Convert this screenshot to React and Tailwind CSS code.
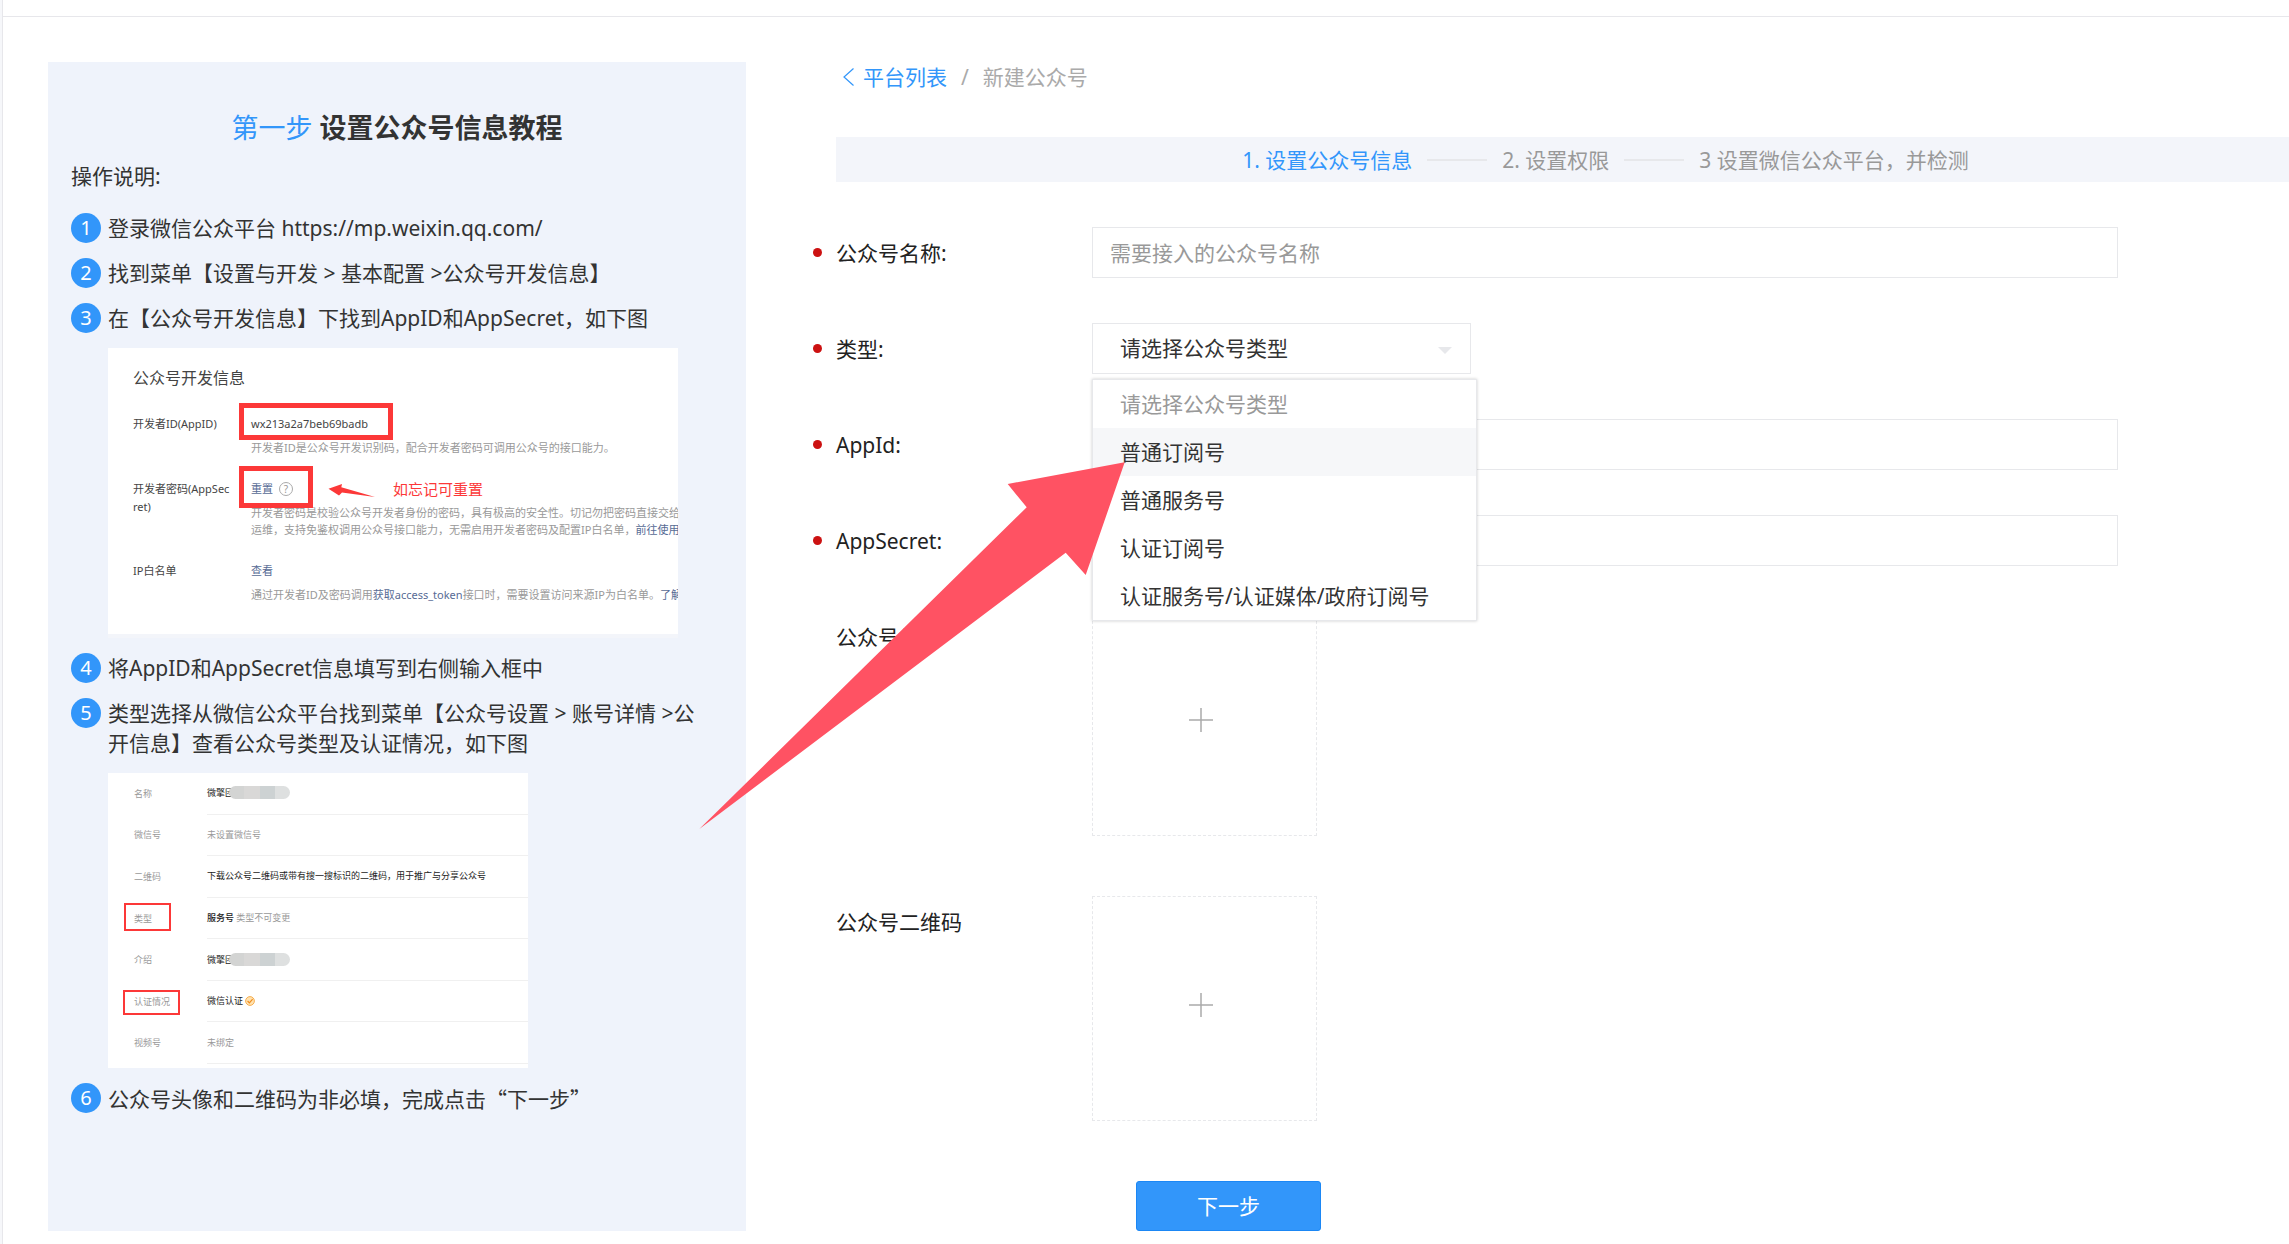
import React, { useState } from 'react';

const steps = ['1. 设置公众号信息', '2. 设置权限', '3 设置微信公众平台，并检测'];

const accountTypes = [
  '请选择公众号类型',
  '普通订阅号',
  '普通服务号',
  '认证订阅号',
  '认证服务号/认证媒体/政府订阅号',
];

const GuideItem = ({ index, children }) => (
  <li className="flex items-start gap-[7px]">
    <span className="w-[30px] h-[30px] shrink-0 rounded-full bg-[#3296fa] text-white text-center text-[20px] leading-[30px]">
      {index}
    </span>
    <div className="min-w-0 flex-1">{children}</div>
  </li>
);

const RedFrame = ({ className }) => (
  <span className={`absolute border-[#fc3838] ${className}`} aria-hidden="true" />
);

const DevInfoCard = () => (
  <div className="mt-[15px] w-full max-w-[570px] overflow-hidden border-b-4 border-[#f3f5fa] bg-white pl-[25px] pt-[21px] pb-[31px] text-[11px] leading-[18px] text-[#444] whitespace-nowrap">
    <h3 className="mb-7 text-[16px] leading-[18px]">公众号开发信息</h3>
    <dl className="grid grid-cols-[118px_1fr] gap-y-6">
      <dt>开发者ID(AppID)</dt>
      <dd className="relative">
        <RedFrame className="-left-[12px] -top-[12px] h-[37px] w-[154px] border-[5px]" />
        wx213a2a7beb69badb
        <p className="mt-[6px] leading-[17px] text-[#999]">
          开发者ID是公众号开发识别码，配合开发者密码可调用公众号的接口能力。
        </p>
      </dd>

      <dt>
        开发者密码(AppSec
        <br />
        ret)
      </dt>
      <dd className="relative">
        <RedFrame className="-left-[12px] -top-[14px] h-[42px] w-[74px] border-[5px]" />
        <div className="flex items-center">
          <a href="#reset" className="text-[#576b95]">重置</a>
          <span className="ml-[6px] h-[14px] w-[14px] rounded-full border border-[#aaa] text-center text-[10px] leading-[12px] text-[#999]">
            ?
          </span>
          <svg className="ml-[35px] h-[16px] w-[48px]" viewBox="0 0 48 16" fill="#fc3838">
            <path d="M0.5 7.7 L14 3 L13.3 6.2 L47 16 L14 11.6 L11 14.6 Z" />
          </svg>
          <span className="ml-[17px] text-[15px] text-[#fc3838]">如忘记可重置</span>
        </div>
        <p className="mt-[6px] leading-[17px] text-[#999]">
          开发者密码是校验公众号开发者身份的密码，具有极高的安全性。切记勿把密码直接交给
          <br />
          运维，支持免鉴权调用公众号接口能力，无需启用开发者密码及配置IP白名单，
          <a href="#use" className="text-[#576b95]">前往使用</a>
        </p>
      </dd>

      <dt>IP白名单</dt>
      <dd>
        <a href="#ip" className="text-[#576b95]">查看</a>
        <p className="mt-[6px] leading-[17px] text-[#999]">
          通过开发者ID及密码调用
          <a href="#token" className="text-[#576b95]">获取access_token</a>
          接口时，需要设置访问来源IP为白名单。
          <a href="#more" className="text-[#576b95]">了解</a>
        </p>
      </dd>
    </dl>
  </div>
);

const MaskedName = () => (
  <span className="relative block text-[#222]">
    微擎团
    <span className="absolute left-[22px] -top-px flex h-[13px] w-[61px] overflow-hidden rounded-full">
      <span className="flex-1 bg-[#d3d4d3]" />
      <span className="flex-1 bg-[#d9d8d7]" />
      <span className="flex-1 bg-[#cdd2d3]" />
      <span className="flex-1 bg-[#dee0e0]" />
    </span>
  </span>
);

const accountRows = [
  { label: '名称', value: <MaskedName /> },
  { label: '微信号', value: '未设置微信号' },
  {
    label: '二维码',
    value: <span className="text-[#222]">下载公众号二维码或带有搜一搜标识的二维码，用于推广与分享公众号</span>,
  },
  {
    label: '类型',
    frame: '-left-[10px] -top-[10px] h-[28px] w-[47px] border-2',
    value: (
      <>
        <b className="font-medium text-[#222]">服务号</b> 类型不可变更
      </>
    ),
  },
  { label: '介绍', value: <MaskedName /> },
  {
    label: '认证情况',
    frame: '-left-[11px] -top-[6px] h-[25px] w-[57px] border-2',
    value: (
      <span className="flex items-center gap-[2px] text-[#222]">
        微信认证
        <svg className="h-[10px] w-[10px]" viewBox="0 0 10 10" fill="none">
          <circle cx="5" cy="5" r="4.4" fill="#ffe2b0" stroke="#f5a742" strokeWidth="0.9" />
          <path d="M2.6 5 L4.4 6.8 L7.6 3.2" stroke="#f08c1e" strokeWidth="1.2" />
        </svg>
      </span>
    ),
  },
  { label: '视频号', value: '未绑定' },
];

const AccountCard = () => (
  <dl className="mt-[15px] flex h-[295px] max-w-[420px] flex-col bg-white pl-[26px] pb-1 text-[9px] leading-[12px] text-[#999] whitespace-nowrap">
    {accountRows.map((row) => (
      <div key={row.label} className="flex flex-1">
        <dt className="flex w-[73px] items-center">
          <span className="relative">
            {row.label}
            {row.frame && <RedFrame className={row.frame} />}
          </span>
        </dt>
        <dd className="flex flex-1 items-center border-b border-[#f0f0f0]">
          <div>{row.value}</div>
        </dd>
      </div>
    ))}
  </dl>
);

const Guide = () => (
  <aside className="w-[698px] shrink-0 bg-[#eff3fb] px-[23px] pt-[47px] text-[#333]">
    <h2 className="text-center text-[27px] font-bold leading-[38px]">
      <span className="font-normal text-[#3296fa]">第一步</span> 设置公众号信息教程
    </h2>
    <p className="mt-[14px]">操作说明:</p>
    <ol className="mt-[22px] flex flex-col gap-[15px]">
      <GuideItem index={1}>登录微信公众平台 https://mp.weixin.qq.com/</GuideItem>
      <GuideItem index={2}>找到菜单【设置与开发 &gt; 基本配置 &gt;公众号开发信息】</GuideItem>
      <GuideItem index={3}>
        在【公众号开发信息】下找到AppID和AppSecret，如下图
        <DevInfoCard />
      </GuideItem>
      <GuideItem index={4}>将AppID和AppSecret信息填写到右侧输入框中</GuideItem>
      <GuideItem index={5}>
        <p className="pr-4">
          类型选择从微信公众平台找到菜单【公众号设置 &gt; 账号详情 &gt;公开信息】查看公众号类型及认证情况，如下图
        </p>
        <AccountCard />
      </GuideItem>
      <GuideItem index={6}>
        公众号头像和二维码为非必填，完成点击
        <span className="font-['Noto_Sans_CJK_SC',sans-serif]">“下一步”</span>
      </GuideItem>
    </ol>
  </aside>
);

const Field = ({ label, id, required, children }) => (
  <div className="relative flex items-start">
    {required && (
      <span className="absolute -left-[23px] top-[21px] h-[9px] w-[9px] rounded-full bg-[#cc1111]" />
    )}
    <label htmlFor={id} className="w-[256px] shrink-0 leading-[52px]">
      {label}
    </label>
    {children}
  </div>
);

const TextInput = (props) => (
  <input
    type="text"
    className="h-[51px] min-w-0 flex-1 border border-[#e7e8eb] bg-white px-[17px] outline-none placeholder:text-[#999]"
    {...props}
  />
);

const UploadBox = ({ id }) => (
  <button
    id={id}
    type="button"
    aria-label="上传图片"
    className="flex h-[225px] w-[225px] items-center justify-center border border-dashed border-[#e7e8eb] pr-2 pb-2"
  >
    <svg className="h-6 w-6" viewBox="0 0 24 24" stroke="#aaa" strokeWidth="1.5">
      <path d="M12 0 V24 M0 12 H24" />
    </svg>
  </button>
);

const TypeSelect = () => {
  const [value, setValue] = useState(accountTypes[0]);

  return (
    <div className="relative w-[379px]">
      <select
        id="type"
        value={value}
        onChange={(e) => setValue(e.target.value)}
        className="block h-[51px] w-full appearance-none border border-[#e7e8eb] bg-white px-[27px] pb-[2px] text-[#333] outline-none"
      >
        {accountTypes.map((type) => (
          <option key={type}>{type}</option>
        ))}
      </select>
      <svg className="pointer-events-none absolute right-[19px] top-6 h-[7px] w-[14px]" viewBox="0 0 14 7" fill="#e7e8eb">
        <path d="M0 0 H14 L7 7 Z" />
      </svg>
      <ul className="absolute left-0 top-[56px] z-10 w-[385px] border border-[#e7e8eb] bg-white text-[#333] shadow-[0_0_3px_rgba(0,0,0,0.2)]">
        {accountTypes.map((type, i) => (
          <li key={type}>
            <button
              type="button"
              onClick={() => setValue(type)}
              className={`block h-12 w-full px-[27px] text-left ${i === 0 ? 'text-[#999]' : ''} ${i === 1 ? 'bg-[#f6f7f9]' : ''}`}
            >
              {type}
            </button>
          </li>
        ))}
      </ul>
    </div>
  );
};

const PointerArrow = () => (
  <svg
    className="pointer-events-none absolute -left-[137px] top-[400px] z-20 h-[368px] w-[427px]"
    viewBox="0 0 427 368"
    fill="#ff5263"
    aria-hidden="true"
  >
    <path d="M425.7 0.3 L308.7 22 L327.7 45.3 L0.3 367 L366.7 90.7 L386.7 113 Z" />
  </svg>
);

const App = () => {
  return (
    <div className="flex min-h-screen overflow-hidden bg-white font-['Noto_Sans','Noto_Sans_CJK_SC',sans-serif] text-[21px] leading-[30px] text-[#222]">
      <div className="w-[3px] shrink-0 border-r border-[#e7e7eb] bg-[#f6f7fa]" />
      <div className="min-w-0 flex-1">
        <div className="h-[17px] border-b border-[#e7e7eb]" />
        <div className="flex pl-[45px] pt-[45px] pb-[13px]">
          <Guide />
          <main className="relative ml-[90px] min-w-0 flex-1">
            <nav className="flex items-center pl-[7px] text-[#aaa]">
              <a href="#list" className="flex items-center gap-[9px] text-[#3296fa]">
                <svg className="h-[18px] w-[11px]" viewBox="0 0 11 18" fill="none" stroke="#3296fa" strokeWidth="1.2">
                  <path d="M10.5 0.5 L1 9 L10.5 17.5" />
                </svg>
                平台列表
              </a>
              <span className="mx-[14px]">/</span>
              新建公众号
            </nav>

            <ol className="mt-[45px] flex h-[45px] items-center justify-center bg-[#f3f5fa] pl-[86px] text-[#999]">
              {steps.map((step, i) => (
                <li key={step} className="flex items-center whitespace-nowrap">
                  {i > 0 && <span className="mx-[15px] h-[2px] w-[60px] bg-[#e7e8eb]" />}
                  <span className={i === 0 ? 'text-[#3296fa]' : ''}>{step}</span>
                </li>
              ))}
            </ol>

            <form className="mt-[45px] flex flex-col" onSubmit={(e) => e.preventDefault()}>
              <div className="flex flex-col gap-[44px] pr-[171px]">
                <Field id="name" label="公众号名称:" required>
                  <TextInput id="name" placeholder="需要接入的公众号名称" />
                </Field>
                <Field id="type" label="类型:" required>
                  <TypeSelect />
                </Field>
                <Field id="appid" label="AppId:" required>
                  <TextInput id="appid" />
                </Field>
                <Field id="secret" label="AppSecret:" required>
                  <TextInput id="secret" />
                </Field>
                <Field id="avatar" label="公众号头像">
                  <UploadBox id="avatar" />
                </Field>
              </div>
              <div className="mt-[60px]">
                <Field id="qrcode" label="公众号二维码">
                  <UploadBox id="qrcode" />
                </Field>
              </div>
              <button
                type="submit"
                className="ml-[300px] mt-[60px] h-[50px] w-[185px] rounded-[3px] border border-[#1b87f5] bg-[#3296fa] text-white"
              >
                下一步
              </button>
            </form>
            <PointerArrow />
          </main>
        </div>
      </div>
    </div>
  );
};

export default App;
